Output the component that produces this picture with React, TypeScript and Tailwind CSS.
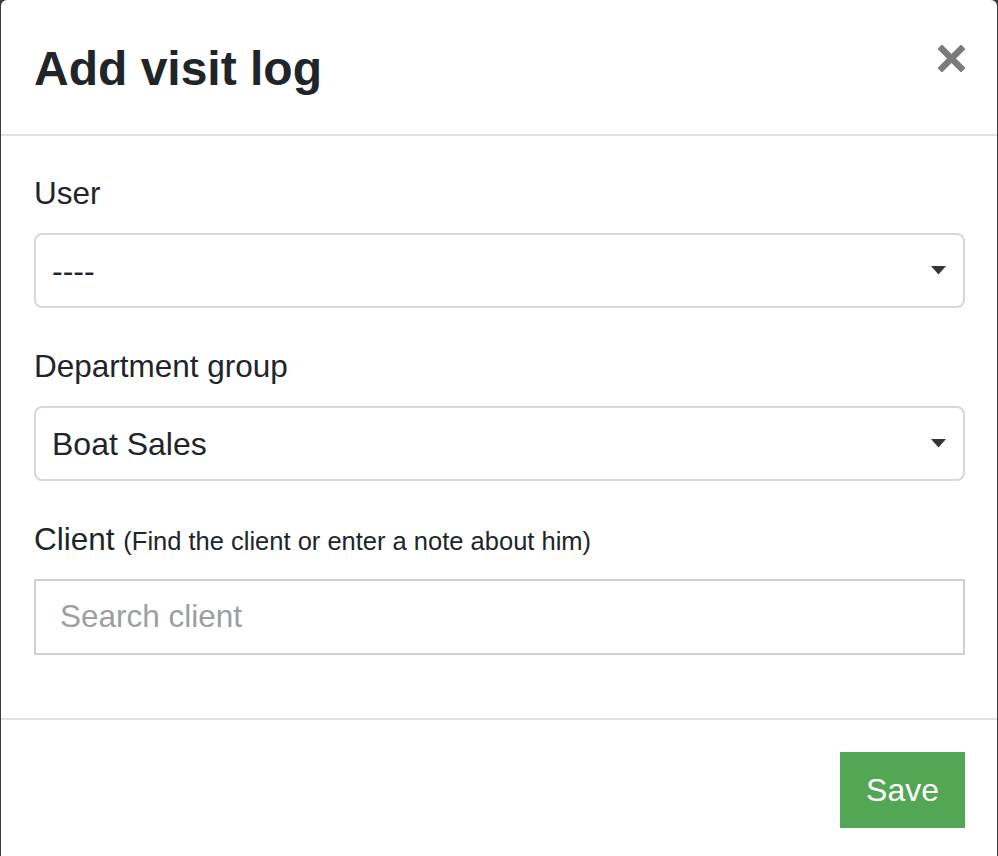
import React from "react";

function Caret() {
  return (
    <svg width="15" height="9" viewBox="0 0 15 9" className="shrink-0">
      <polygon points="0,0 15,0 7.5,8.5" fill="#333638" />
    </svg>
  );
}

function SelectBox({ value }: { value: string }) {
  return (
    <div className="flex h-[75px] w-full items-center justify-between rounded-[8px] border-2 border-[#d4d7db] bg-white pl-[16px] pr-[17px]">
      <span className="text-[32px] leading-none text-[#212529]">{value}</span>
      <Caret />
    </div>
  );
}

export default function App() {
  return (
    <div
      className="h-[856px] w-[998px] overflow-hidden bg-[#3b3b3b]"
      style={{ fontFamily: '"Liberation Sans", Arial, Helvetica, sans-serif' }}
    >
      <div className="ml-[1px] flex h-[856px] w-[996px] flex-col rounded-t-[6px] bg-white">
        {/* Header */}
        <div className="flex h-[136px] items-start justify-between border-b-2 border-[#e0e3e6] pl-[33px] pr-[32px]">
          <h4 className="mt-[40px] text-[48px] font-bold leading-[1.2] text-[#212529]">
            Add visit log
          </h4>
          <button className="mt-[45px] flex h-[27px] w-[27px] items-center justify-center" aria-label="Close">
            <svg width="27" height="27" viewBox="0 0 27 27">
              <line x1="4" y1="4" x2="23" y2="23" stroke="#7b7b7b" strokeWidth="6.5" strokeLinecap="square" />
              <line x1="23" y1="4" x2="4" y2="23" stroke="#7b7b7b" strokeWidth="6.5" strokeLinecap="square" />
            </svg>
          </button>
        </div>

        {/* Body */}
        <div className="flex flex-col pl-[33px] pr-[32px] pt-[33px] pb-[31px]">
          <div className="mb-[34px]">
            <label className="mb-[16px] block text-[31.5px] leading-[48px] text-[#212529]">User</label>
            <SelectBox value="----" />
          </div>
          <div className="mb-[34px]">
            <label className="mb-[16px] block text-[31.5px] leading-[48px] text-[#212529]">Department group</label>
            <SelectBox value="Boat Sales" />
          </div>
          <div className="mb-[32px]">
            <label className="mb-[14px] block text-[31.5px] leading-[48px] text-[#212529]">
              Client{" "}
              <span className="text-[25.5px]">(Find the client or enter a note about him)</span>
            </label>
            <div className="flex h-[76px] w-full items-center border-2 border-[#cfcfcf] bg-white pl-[24px]">
              <span className="text-[31.5px] leading-none text-[#9b9fa3]">Search client</span>
            </div>
          </div>
        </div>

        {/* Footer */}
        <div className="flex justify-end border-t-2 border-[#e0e3e6] pr-[32px] pt-[32px]">
          <button className="flex h-[76px] w-[125px] items-center justify-center bg-[#53a653] text-[32px] text-white">
            Save
          </button>
        </div>
      </div>
    </div>
  );
}
